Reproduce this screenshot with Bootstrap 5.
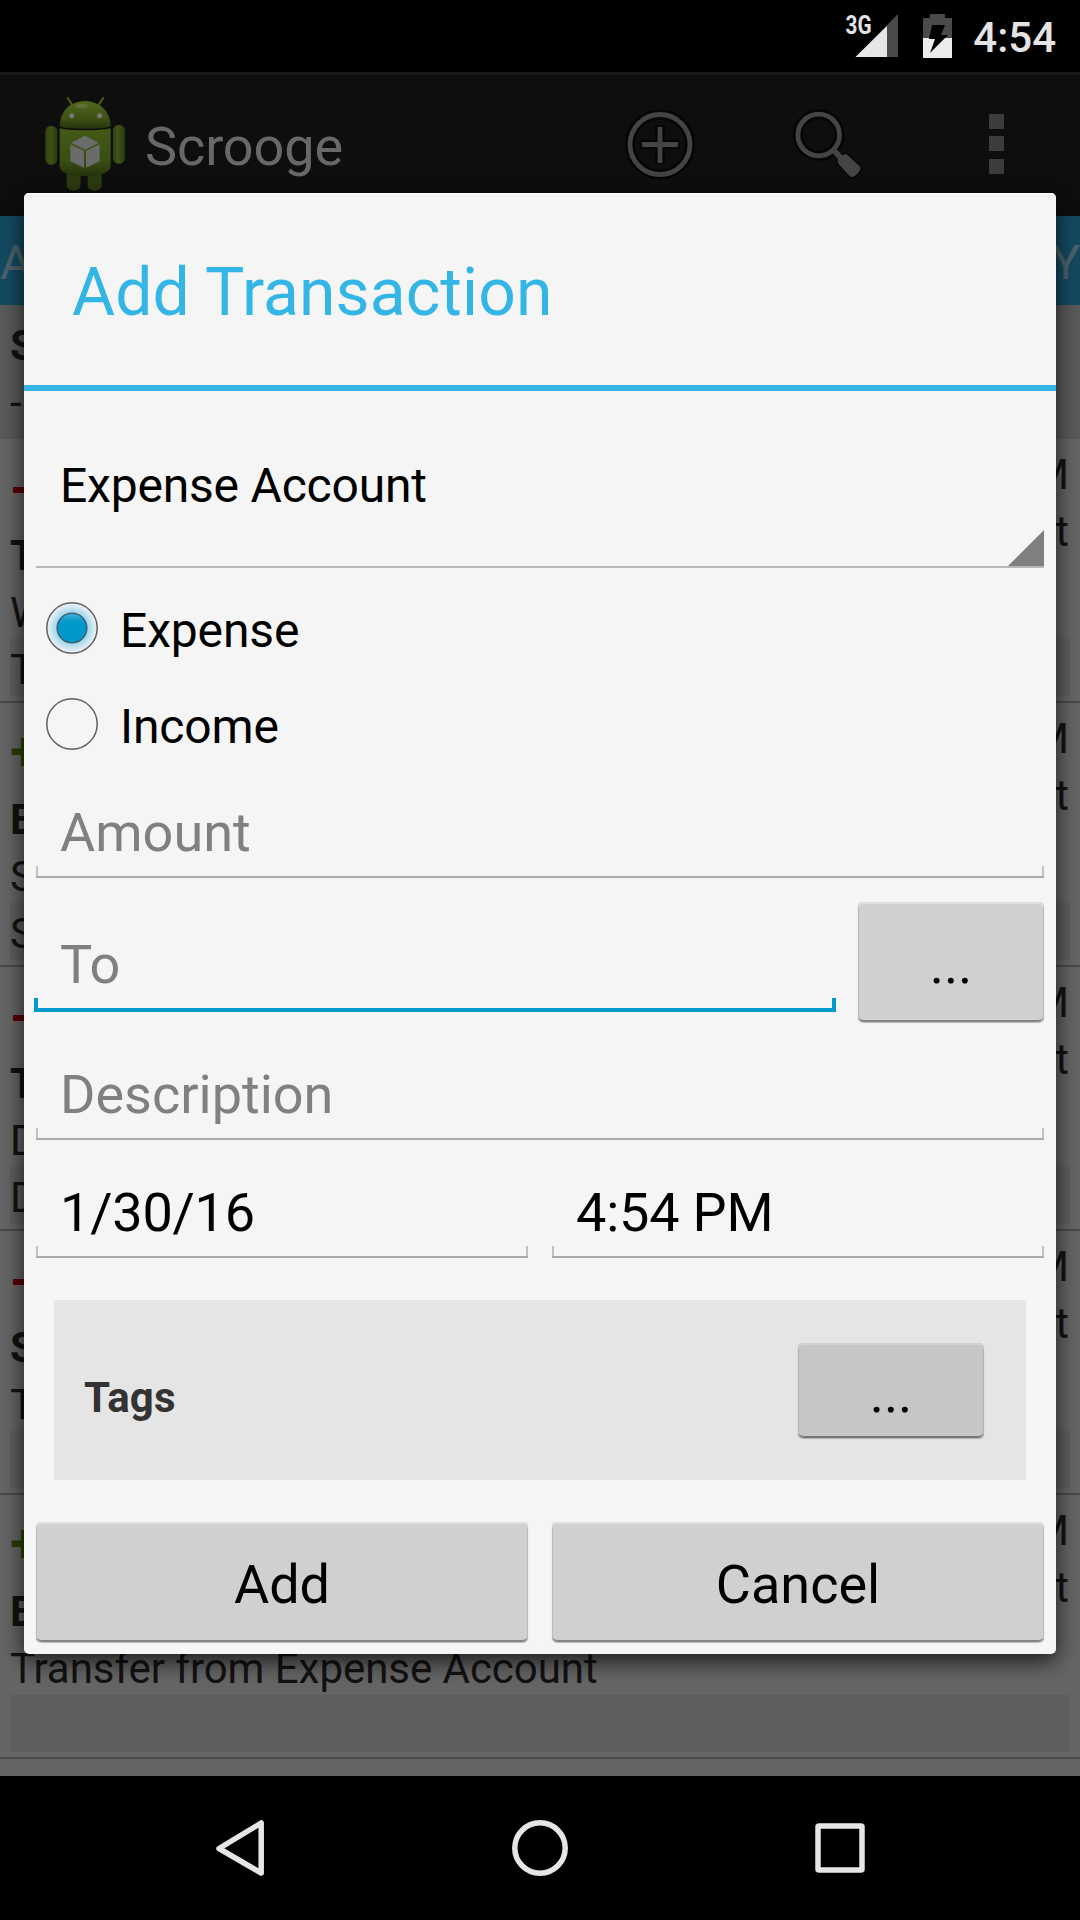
<!DOCTYPE html>
<html lang="en">
<head>
<meta charset="utf-8">
<meta name="viewport" content="width=device-width, initial-scale=1">
<title>Scrooge</title>
<link rel="stylesheet" href="https://cdn.jsdelivr.net/npm/bootstrap@5.3.0/dist/css/bootstrap.min.css">
<style>
body{margin:0;background:#000;font-family:Roboto,"Noto Sans",sans-serif;color:#000}
svg{display:block;flex:none}
.screen{width:1080px;height:1920px;overflow:hidden;background:#000}
.statusbar{height:72px;padding-right:24px}
.clock{font-size:42px;font-weight:500;line-height:72px;color:#e4e4e4;width:83px;text-align:right;padding-top:2px}
.appbar{height:144px;background:#0e0e0e;border-top:3px solid #191919;padding-left:43px}
.robot{margin-top:20px}
.apptitle{font-size:54px;line-height:72px;color:#686868;margin-left:18px;padding-top:36px;letter-spacing:-.1px}
.tabstrip{height:89px;background:#144a60;color:#4c626c;font-size:48px;line-height:93px}
.ledger{height:1471px;background:#656565;color:#121212;font-size:42px}
.summary{height:134px;background:#5a5a5a;padding:12px 10px 0;line-height:57px}
.entry{height:264px;border-bottom:2px solid #484848;padding:0 10px}
.amount-sign{height:88px;font-size:54px;font-weight:700;line-height:97px}
.minus{color:#570000}.plus{color:#294000}
.payee{height:59px;line-height:57px;font-weight:700}
.meta{line-height:57px;padding:7px 1px 0 0;height:147px;text-align:right}
.note{height:53px;line-height:53px;letter-spacing:-.04px}
.taglist{height:57px;line-height:53px;padding-top:4px;background:#5e5e5e}
.navbtns{height:144px;background:#000}
.sheet{left:24px;top:193px;width:1032px;height:1461px;background:#f5f5f5;border-radius:5px;box-shadow:inset 0 1px 0 #fff,0 7px 22px rgba(0,0,0,.75)}
.sheet-title{height:198px;border-bottom:6px solid #33b5e5;color:#33b5e5;font-size:66px;line-height:199px;padding-left:48px;letter-spacing:.08px}
.sheet-form{padding:0 12px}
.picker{height:177px;border-bottom:2px solid #b7b7b7;font-size:48px;line-height:161px;padding-left:24px;letter-spacing:-.2px}
.choices{padding-top:12px}
.choice{height:96px;font-size:48px;line-height:72px;gap:20px;padding-left:8px;letter-spacing:-.15px}
.choice span{padding-top:5px}
.field{height:80px;font-size:54px;line-height:69px;padding-left:24px;background:linear-gradient(#ababab,#ababab) bottom/100% 2px no-repeat,linear-gradient(#c0c0c0,#c0c0c0) left bottom/2px 12px no-repeat,linear-gradient(#c0c0c0,#c0c0c0) right bottom/2px 12px no-repeat}
.value{letter-spacing:-.2px}
.hint{color:#808080}
.first-field{margin-top:26px}
.spaced{margin-top:38px}
.field.active{line-height:65px;margin:0 0 10px -2px;padding-left:26px;width:802px;background:linear-gradient(#0099cc,#0099cc) bottom/100% 4px no-repeat,linear-gradient(#0099cc,#0099cc) left bottom/4px 14px no-repeat,linear-gradient(#0099cc,#0099cc) right bottom/4px 14px no-repeat}
.holo,.holo:hover{background:#d0d0d0;border:0;border-radius:5px;color:#000;font-size:54px;padding:0;box-shadow:inset 0 2px 0 #dfdfdf,inset 1px 0 #bbb,inset -1px 0 #bbb,inset 0 -2px 0 #858585,0 1px 1px #bbb;height:120px;line-height:125px}
.more{width:186px}
.tagpanel{height:180px;background:#e5e5e5;margin:42px 18px;padding:0 42px 0 30px}
.tagpanel .label-text{font-size:42px;font-weight:700;line-height:60px;padding-top:15px;color:#333;letter-spacing:.2px}
.tagpanel .holo{background:#c6c6c6;height:95px;line-height:101px;box-shadow:inset 0 2px 0 #d2d2d2,inset 1px 0 #b2b2b2,inset -1px 0 #b2b2b2,inset 0 -2px 0 #777,0 1px 1px #b0b0b0}
</style>
<script src="https://cdn.jsdelivr.net/npm/bootstrap@5.3.0/dist/js/bootstrap.bundle.min.js"></script>
</head>
<body>
<div class="screen position-relative d-flex flex-column">
  <header class="statusbar d-flex justify-content-end">
    <svg width="130" height="72" viewBox="843 0 130 72">
      <text x="845.5" y="33.5" font-size="26" font-weight="700" fill="#e4e4e4" textLength="26" lengthAdjust="spacingAndGlyphs">3G</text>
      <path d="M898 14V57H855.5Z" fill="#4a4a4a"/><path d="M887 26V57H855.5Z" fill="#e6e6e6"/>
      <path d="M923 18h7v-4h15v4h7v20h-29z" fill="#4a4a4a"/><path d="M923 38h29v20h-29z" fill="#ececec"/>
      <path d="M932 25h13l-4 10h7l-18 18 5-14h-6z" fill="#000"/>
    </svg>
    <div class="clock">4:54</div>
  </header>
  <nav class="appbar d-flex">
    <svg class="robot" width="84" height="97" viewBox="130 105 252 291">
      <defs>
        <linearGradient id="skin" x2="0" y2="1"><stop stop-color="#51671c"/><stop offset=".65" stop-color="#3c5014"/><stop offset="1" stop-color="#26320c"/></linearGradient>
        <linearGradient id="trunk" x2="0" y2="1"><stop stop-color="#445a16"/><stop offset=".7" stop-color="#3a4d13"/><stop offset="1" stop-color="#26320c"/></linearGradient>
        <linearGradient id="limb"><stop stop-color="#2f4010"/><stop offset=".4" stop-color="#3f5415"/><stop offset="1" stop-color="#2b390e"/></linearGradient>
      </defs>
      <path d="M204 114l13 20M311 114l-14 20" stroke="#4a5d1b" stroke-width="6" stroke-linecap="round"/>
      <rect x="137" y="198" width="36" height="116" rx="16" fill="url(#limb)"/><rect x="340" y="195" width="36" height="116" rx="16" fill="url(#limb)"/>
      <path d="M201 335h42v38q0 19-21 19t-21-19zM264 335h42v38q0 19-21 19t-21-19z" fill="#2c3a0f"/>
      <path d="M180 199Q181 163 202 143Q226 123 256 123T310 143Q332 163 333 199Q320 206 256 206T180 199Z" fill="url(#skin)"/>
      <path d="M180 205Q205 211 256 211T333 205V317Q331 348 256 348T180 317Z" fill="url(#trunk)"/>
      <ellipse cx="245" cy="138" rx="20" ry="7" fill="#6c7040" opacity=".7"/>
      <circle cx="216" cy="167" r="7.5" fill="#777"/><circle cx="300" cy="167" r="7.5" fill="#777"/>
      <path d="M256 227l42 21-42 21-41-21zM212 253l41 20v50l-41-19zM300 253l-41 20v50l41-19z" fill="#6b6b6b"/>
    </svg>
    <div class="apptitle">Scrooge</div>
    <svg class="ms-auto" width="460" height="118" viewBox="620 75 460 118">
      <g fill="none" stroke="#050505" stroke-width="10"><circle cx="660" cy="144.500" r="30"/><path d="M660 125v39M640 144.500h40"/><circle cx="818.700" cy="135" r="20.800"/></g>
      <g fill="none" stroke="#444" stroke-width="4.800"><circle cx="660" cy="144.500" r="30"/><path d="M660 127v36M642 144.500h36"/><circle cx="818.700" cy="135" r="20.800"/></g>
      <path d="M837.500 160q0-4 8-6 1 0 2 1l12 11q2 2 0 5-3 5-7 6-2 0-3-1l-11-12q-1-2-1-4z" fill="#444" stroke="#050505" stroke-width="3" paint-order="stroke"/>
      <path d="M833.500 150l8 8.500" stroke="#444" stroke-width="5.500"/>
      <path d="M989 114h15v15h-15zM989 136h15v15h-15zM989 159h15v15h-15z" fill="#3c3c3c"/>
    </svg>
  </nav>
  <div class="tabstrip d-flex justify-content-between"><span>A</span><span>Y</span></div>
  <main class="ledger">
    <div class="summary"><b class="d-block">S</b><span class="d-block">-</span></div>
    <div class="entry">
      <div class="d-flex justify-content-between"><div><div class="amount-sign minus">-</div><div class="payee">T</div></div><div class="meta">M<br>t</div></div>
      <div class="note">W</div><div class="taglist">T</div>
    </div>
    <div class="entry">
      <div class="d-flex justify-content-between"><div><div class="amount-sign plus">+</div><div class="payee">E</div></div><div class="meta">M<br>t</div></div>
      <div class="note">S</div><div class="taglist">S</div>
    </div>
    <div class="entry">
      <div class="d-flex justify-content-between"><div><div class="amount-sign minus">-</div><div class="payee">T</div></div><div class="meta">M<br>t</div></div>
      <div class="note">D</div><div class="taglist">D</div>
    </div>
    <div class="entry">
      <div class="d-flex justify-content-between"><div><div class="amount-sign minus">-</div><div class="payee">S</div></div><div class="meta">M<br>t</div></div>
      <div class="note">T</div><div class="taglist"></div>
    </div>
    <div class="entry">
      <div class="d-flex justify-content-between"><div><div class="amount-sign plus">+</div><div class="payee">E</div></div><div class="meta">M<br>t</div></div>
      <div class="note">Transfer from Expense Account</div><div class="taglist"></div>
    </div>
  </main>
  <footer class="navbtns">
    <svg width="1080" height="144" viewBox="0 1776 1080 144" fill="none" stroke="#e6e6e6" stroke-width="5.500" stroke-linejoin="round">
      <path d="M261.200 1823v50L219 1848.500Z"/><circle cx="540" cy="1848" r="25.200"/><rect x="818" y="1826" width="44" height="44" rx="1"/>
    </svg>
  </footer>

  <section class="sheet position-absolute" role="dialog">
    <div class="sheet-title">Add Transaction</div>
    <div class="sheet-form d-flex flex-column">
      <div class="picker d-flex justify-content-between align-items-end"><span>Expense Account</span>
        <svg width="36" height="36"><path d="M36 0V36H0Z" fill="#808080"/></svg></div>
      <div class="choices">
        <div class="choice d-flex align-items-center">
          <svg width="56" height="56" viewBox="0 0 56 56"><defs><radialGradient id="glow"><stop offset=".6" stop-color="#9ed5ea"/><stop offset="1" stop-color="#eef5f7"/></radialGradient><linearGradient id="dot" x2="0" y2="1"><stop stop-color="#45b2d8"/><stop offset=".3" stop-color="#0099cc"/></linearGradient></defs>
            <circle cx="28" cy="28" r="25.200" fill="url(#glow)" stroke="#606060" stroke-width="1.500"/><circle cx="28" cy="28" r="14.800" fill="url(#dot)" stroke="#3c6270" stroke-width="1.500"/></svg>
          <span>Expense</span>
        </div>
        <div class="choice d-flex align-items-center">
          <svg width="56" height="56" viewBox="0 0 56 56"><circle cx="28" cy="28" r="25.200" fill="none" stroke="#606060" stroke-width="1.500"/></svg>
          <span>Income</span>
        </div>
      </div>
      <div class="field hint first-field">Amount</div>
      <div class="d-flex justify-content-between align-items-end mt-4">
        <div class="field hint active">To</div><button class="btn holo more">...</button>
      </div>
      <div class="field hint spaced">Description</div>
      <div class="d-flex gap-4 spaced"><div class="field value w-50">1/30/16</div><div class="field value w-50">4:54 PM</div></div>
      <div class="tagpanel d-flex justify-content-between align-items-center"><span class="label-text">Tags</span><button class="btn holo more">...</button></div>
      <div class="d-flex gap-4"><button class="btn holo w-50">Add</button><button class="btn holo w-50">Cancel</button></div>
    </div>
  </section>
</div>
</body>
</html>
